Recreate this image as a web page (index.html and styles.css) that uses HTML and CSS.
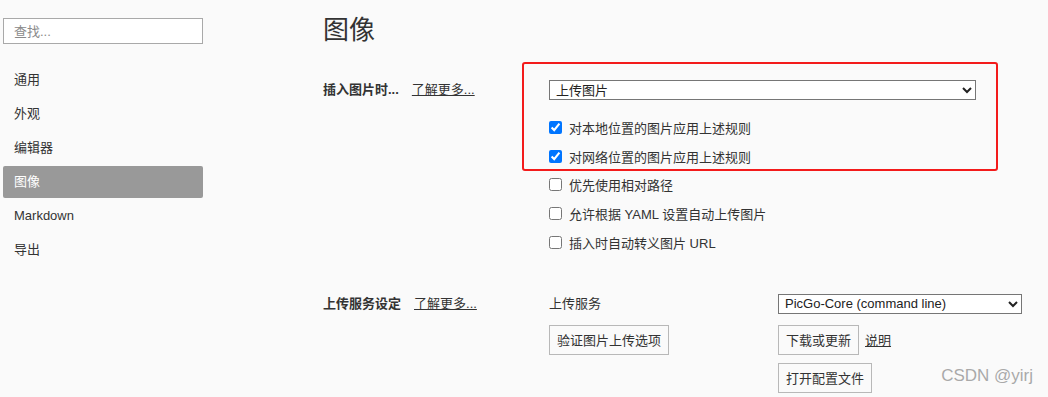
FILE: index.html
```html
<!DOCTYPE html>
<html lang="zh-CN">
<head>
<meta charset="utf-8">
<title>偏好设置 - 图像</title>
<link rel="stylesheet" href="styles.css">
</head>
<body>
<aside class="sidebar">
  <input class="search" type="text" placeholder="查找...">
  <nav class="nav">
    <div class="nav-item">通用</div>
    <div class="nav-item">外观</div>
    <div class="nav-item">编辑器</div>
    <div class="nav-item active">图像</div>
    <div class="nav-item">Markdown</div>
    <div class="nav-item">导出</div>
  </nav>
</aside>
<main class="main">
  <h1 class="title">图像</h1>

  <section class="section first">
    <div class="label"><b>插入图片时...</b><a class="more" href="#">了解更多...</a></div>
    <div class="controls">
      <select class="select wide"><option>上传图片</option></select>
      <div class="checks">
        <label class="check"><input type="checkbox" checked>对本地位置的图片应用上述规则</label>
        <label class="check"><input type="checkbox" checked>对网络位置的图片应用上述规则</label>
        <label class="check"><input type="checkbox">优先使用相对路径</label>
        <label class="check"><input type="checkbox">允许根据 YAML 设置自动上传图片</label>
        <label class="check"><input type="checkbox">插入时自动转义图片 URL</label>
      </div>
    </div>
  </section>

  <section class="section second">
    <div class="label"><b>上传服务设定</b><a class="more" href="#">了解更多...</a></div>
    <div class="service">
      <div class="svc-label">上传服务</div>
      <select class="select narrow"><option>PicGo-Core (command line)</option></select>
      <div class="row2"><button class="btn">验证图片上传选项</button></div>
      <div class="row2"><button class="btn">下载或更新</button><a class="help" href="#">说明</a></div>
      <div class="row3"></div>
      <div class="row3"><button class="btn">打开配置文件</button></div>
    </div>
  </section>
</main>
<div class="annot"></div>
<div class="watermark">CSDN @yirj</div>
</body>
</html>
```

FILE: styles.css
```css
html, body {
  margin: 0;
  padding: 0;
  background: #fafafa;
}
body {
  display: flex;
  min-height: 397px;
  font-family: "Liberation Sans", "Noto Sans CJK SC", sans-serif;
  font-size: 13px;
  color: #333;
  overflow: hidden;
}
.sidebar {
  width: 200px;
  margin-left: 3px;
  padding-top: 18px;
  flex: none;
}
.search {
  display: block;
  box-sizing: border-box;
  width: 200px;
  height: 26px;
  margin: 0;
  padding: 0 10px;
  border: 1px solid #a9a9a9;
  border-radius: 0;
  background: #fff;
  font-family: inherit;
  font-size: 13px;
  color: #333;
  outline: none;
}
.search::placeholder { color: #8a8a8a; }
.nav {
  margin-top: 20px;
  display: flex;
  flex-direction: column;
  gap: 2px;
}
.nav-item {
  height: 32px;
  line-height: 32px;
  padding-left: 11px;
  border-radius: 2px;
  color: #333;
}
.nav-item.active {
  background: #999;
  color: #fff;
}
.main {
  flex: 1;
  padding-left: 120px;
}
.title {
  margin: 14px 0 0;
  font-size: 26px;
  font-weight: normal;
  line-height: 32px;
  color: #333;
}
.section {
  display: flex;
}
.section.first { margin-top: 34px; }
.section.second { margin-top: 37px; }
.label {
  width: 226px;
  flex: none;
  line-height: 20px;
  white-space: nowrap;
}
.label b { font-weight: bold; }
.more {
  margin-left: 13px;
  color: #333;
  text-decoration: underline;
}
.select {
  box-sizing: border-box;
  height: 20px;
  margin: 0;
  padding: 0 2px;
  border: 1px solid #767676;
  border-radius: 0;
  background: #fff;
  font-family: inherit;
  font-size: 13px;
  color: #222;
}
.select.wide { width: 427px; display: block; }
.select.narrow { width: 244px; }
.checks {
  margin-top: 13px;
  display: flex;
  flex-direction: column;
}
.check {
  height: 28.75px;
  display: flex;
  align-items: center;
  white-space: nowrap;
}
.check input {
  width: 13px;
  height: 13px;
  margin: 0 7px 0 0;
}
.service {
  display: grid;
  grid-template-columns: 229px 244px;
  grid-auto-rows: auto;
  align-items: start;
}
.svc-label { line-height: 20px; height: 20px; }
.row2 {
  height: 30px;
  margin-top: 11px;
  display: flex;
  align-items: center;
}
.row3 {
  height: 30px;
  margin-top: 8px;
  display: flex;
  align-items: center;
}
.btn {
  box-sizing: border-box;
  height: 30px;
  margin: 0;
  padding: 0 7px;
  border: 1px solid #b8b8b8;
  border-radius: 0;
  background: #fafafa;
  font-family: inherit;
  font-size: 13px;
  color: #333;
}
.help {
  margin-left: 6px;
  color: #333;
  text-decoration: underline;
}
.annot {
  position: absolute;
  left: 522px;
  top: 62px;
  width: 476px;
  height: 109px;
  box-sizing: border-box;
  border: 2px solid #f31b1b;
  border-radius: 3px;
  pointer-events: none;
}
.watermark {
  position: absolute;
  right: 15px;
  top: 365px;
  font-family: "Liberation Sans", sans-serif;
  font-size: 17px;
  line-height: 22px;
  color: #a9a9a9;
  text-shadow: 0 0 1px #fff;
  pointer-events: none;
}
```
